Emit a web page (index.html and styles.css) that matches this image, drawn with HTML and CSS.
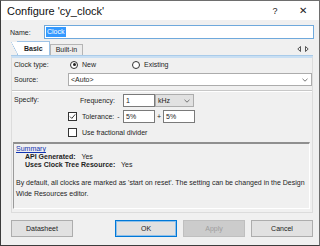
FILE: index.html
```html
<!DOCTYPE html>
<html lang="en">
<head>
  <meta charset="UTF-8">
  <title>Configure 'cy_clock'</title>
  <link rel="stylesheet" href="styles.css">
</head>
<body>
  <div class="window">
    <div class="titlebar">
      <span class="title">Configure 'cy_clock'</span>
      <span class="tb-btn">?</span>
      <span class="tb-btn close">&#x2715;</span>
    </div>

    <div class="content">
      <div class="name-row">
        <label class="name-label">Name:</label>
        <div class="name-input"><span class="selected">Clock</span></div>
      </div>

      <div class="tabs">
        <div class="tab active">Basic</div>
        <div class="tab">Built-in</div>
        <div class="tab-arrows">
          <svg width="12" height="6" viewBox="0 0 12 6">
            <path d="M3.5 0.5 L0.8 3 L3.5 5.5 Z" fill="none" stroke="#444" stroke-width="0.9"/>
            <path d="M8.5 0.5 L11.2 3 L8.5 5.5 Z" fill="none" stroke="#444" stroke-width="0.9"/>
          </svg>
        </div>
      </div>

      <div class="panel">
        <div class="row">
          <span class="row-label">Clock type:</span>
          <span class="radio checked"></span><span class="radio-text">New</span>
          <span class="radio"></span><span class="radio-text">Existing</span>
        </div>

        <div class="row source-row">
          <span class="row-label">Source:</span>
          <div class="combo">
            <span>&lt;Auto&gt;</span>
            <svg class="chevron" width="6" height="4" viewBox="0 0 6 4"><path d="M0.5 0.8 L3 3.2 L5.5 0.8" fill="none" stroke="#555" stroke-width="0.8"/></svg>
          </div>
        </div>

        <div class="separator"></div>

        <div class="specify">
          <span class="row-label specify-label">Specify:</span>
          <div class="spec-rows">
            <div class="spec-row">
              <span class="spec-cell freq-label">Frequency:</span>
              <div class="field">1</div>
              <div class="unit">
                <span>kHz</span>
                <svg class="chevron" width="6" height="4" viewBox="0 0 6 4"><path d="M0.5 0.8 L3 3.2 L5.5 0.8" fill="none" stroke="#555" stroke-width="0.8"/></svg>
              </div>
            </div>
            <div class="spec-row">
              <span class="spec-cell">
                <span class="checkbox checked">
                  <svg width="7" height="7" viewBox="0 0 7 7"><path d="M1 3.6 L2.8 5.4 L6.2 1.4" fill="none" stroke="#222" stroke-width="0.9"/></svg>
                </span>
                <span class="check-text">Tolerance:</span>
                <span class="sign">-</span>
              </span>
              <div class="field">5%</div>
              <span class="plus">+</span>
              <div class="field">5%</div>
            </div>
            <div class="spec-row">
              <span class="checkbox"></span>
              <span class="check-text">Use fractional divider</span>
            </div>
          </div>
        </div>

        <div class="summary">
          <a class="summary-title">Summary</a>
          <div class="summary-line"><b>API Generated:</b> Yes</div>
          <div class="summary-line"><b>Uses Clock Tree Resource:</b> Yes</div>
          <p class="note">By default, all clocks are marked as 'start on reset'. The setting can be changed in the Design<br>Wide Resources editor.</p>
        </div>
      </div>

      <div class="buttons">
        <button class="btn">Datasheet</button>
        <span class="spacer"></span>
        <button class="btn default">OK</button>
        <button class="btn" disabled>Apply</button>
        <button class="btn">Cancel</button>
      </div>
    </div>
  </div>
</body>
</html>
```

FILE: styles.css
```css
body {
  margin: 0;
  font-family: 'Liberation Sans', Arial, sans-serif;
  font-size: 7px;
  color: #1e1e1e;
}

.window {
  width: 320px;
  height: 246px;
  box-sizing: border-box;
  border: 1px solid #6e6e6e;
  border-left-color: #3c3c3c;
  border-bottom-color: #3c3c3c;
  background-color: #f0f0f0;
}

.titlebar {
  height: 19px;
  background-color: #fff;
  display: flex;
  align-items: center;
  padding-left: 6px;
}

.title {
  font-size: 11px;
  color: #111;
  flex: 1;
}

.tb-btn {
  font-size: 9px;
  color: #222;
  width: 28px;
  text-align: center;
}

.tb-btn.close {
  font-size: 10px;
  margin-right: 2px;
}

.content {
  padding: 5px 5px 0 9px;
}

.name-row {
  display: flex;
  align-items: center;
  height: 14px;
}

.name-label {
  width: 34px;
}

.name-input {
  flex: 1;
  height: 12px;
  border: 1px solid #6fa9dc;
  background-color: #fff;
  display: flex;
  align-items: center;
  padding-left: 1px;
}

.selected {
  background-color: #3399ff;
  color: #fff;
  padding: 0 1px;
  line-height: 10px;
}

.tabs {
  display: flex;
  align-items: flex-end;
  height: 16px;
  margin-left: 1px;
  margin-right: 1px;
  border-bottom: 1px solid #a9cbe9;
}

.tab {
  height: 10px;
  line-height: 10px;
  padding: 0 5px;
  border: 1px solid #b5b5b5;
  border-bottom: none;
  background-color: #ececec;
}

.tab.active {
  height: 13px;
  line-height: 13px;
  font-weight: bold;
  background-color: #fff;
  border-color: #9ec3e6;
  margin-left: 6px;
  padding: 0 6px;
  position: relative;
}

.tab.active::before {
  content: "";
  position: absolute;
  left: -7px;
  bottom: 0;
  width: 7px;
  height: 13px;
  background: linear-gradient(to top right, transparent 48%, #9ec3e6 50%, #fff 56%);
}

.tab-arrows {
  margin-left: auto;
  margin-right: 4px;
  margin-bottom: 3px;
  display: flex;
}

.panel {
  height: 157px;
  margin-left: 1px;
  margin-right: 1px;
  border: 1px solid #dcdcdc;
  border-top: 2px solid #c9dff3;
  box-sizing: border-box;
}

.row {
  display: flex;
  align-items: center;
  height: 13px;
  padding-left: 2px;
}

.row-label {
  width: 54px;
  flex-shrink: 0;
}

.radio {
  width: 8px;
  height: 8px;
  border: 1px solid #333;
  border-radius: 50%;
  background-color: #fff;
  box-sizing: border-box;
  position: relative;
  margin-left: 2px;
}

.radio.checked::after {
  content: "";
  position: absolute;
  left: 1.5px;
  top: 1.5px;
  width: 3px;
  height: 3px;
  border-radius: 50%;
  background-color: #222;
}

.radio-text {
  margin-left: 4px;
  width: 48px;
}

.source-row {
  height: 15px;
  margin-top: 1px;
}

.combo {
  width: 245px;
  height: 13px;
  box-sizing: border-box;
  border: 1px solid #acacac;
  background-color: #fff;
  display: flex;
  align-items: center;
  justify-content: space-between;
  padding: 0 3px 0 2px;
}

.separator {
  height: 1px;
  margin-top: 3px;
  background-color: #c8c8c8;
  border-bottom: 1px solid #fff;
}

.specify {
  display: flex;
  padding-left: 2px;
  padding-top: 2px;
}

.specify-label {
  padding-top: 2px;
}

.spec-rows {
  display: flex;
  flex-direction: column;
  gap: 3px;
}

.spec-row {
  display: flex;
  align-items: center;
  height: 13px;
}

.spec-cell {
  width: 55px;
  display: flex;
  align-items: center;
}

.freq-label {
  justify-content: flex-end;
  padding-right: 8px;
  box-sizing: border-box;
}

.field {
  width: 32px;
  height: 13px;
  box-sizing: border-box;
  border: 1px solid #7a7a7a;
  background-color: #fff;
  padding-left: 2px;
  line-height: 11px;
}

.unit {
  width: 39px;
  height: 13px;
  box-sizing: border-box;
  border: 1px solid #adadad;
  background-color: #e1e1e1;
  display: flex;
  align-items: center;
  justify-content: space-between;
  padding: 0 3px 0 2px;
}

.checkbox {
  width: 9px;
  height: 9px;
  box-sizing: border-box;
  border: 1px solid #333;
  background-color: #fff;
  display: flex;
  align-items: center;
  justify-content: center;
}

.check-text {
  margin-left: 5px;
}

.sign {
  margin-left: 3px;
}

.plus {
  width: 8px;
  text-align: center;
}

.summary {
  margin: 3px 2px 0 1px;
  height: 67px;
  box-sizing: border-box;
  border-top: 2px solid #8f8f8f;
  border-left: 1px solid #9a9a9a;
  border-right: 1px solid #fff;
  border-bottom: 1px solid #fff;
  padding: 1px 2px;
}

.summary-title {
  color: #1234b0;
  text-decoration: underline;
  line-height: 8px;
  display: block;
}

.summary-line {
  padding-left: 9px;
  line-height: 8px;
}

.summary-line b {
  margin-right: 4px;
}

.note {
  margin: 8px 0 0;
  line-height: 11px;
}

.buttons {
  display: flex;
  align-items: center;
  gap: 6px;
  margin-top: 7px;
  padding-left: 1px;
  padding-right: 1px;
}

.spacer {
  flex: 1;
}

.btn {
  width: 62px;
  height: 17px;
  font-family: inherit;
  font-size: 7px;
  color: #222;
  background-color: #e1e1e1;
  border: 1px solid #adadad;
  padding: 0;
}

.btn.default {
  border: 1px solid #0078d7;
  box-shadow: inset 0 0 0 1px #8ec0ea;
}

.btn:disabled {
  color: #9e9e9e;
  background-color: #cccccc;
  border-color: #bfbfbf;
}
```
